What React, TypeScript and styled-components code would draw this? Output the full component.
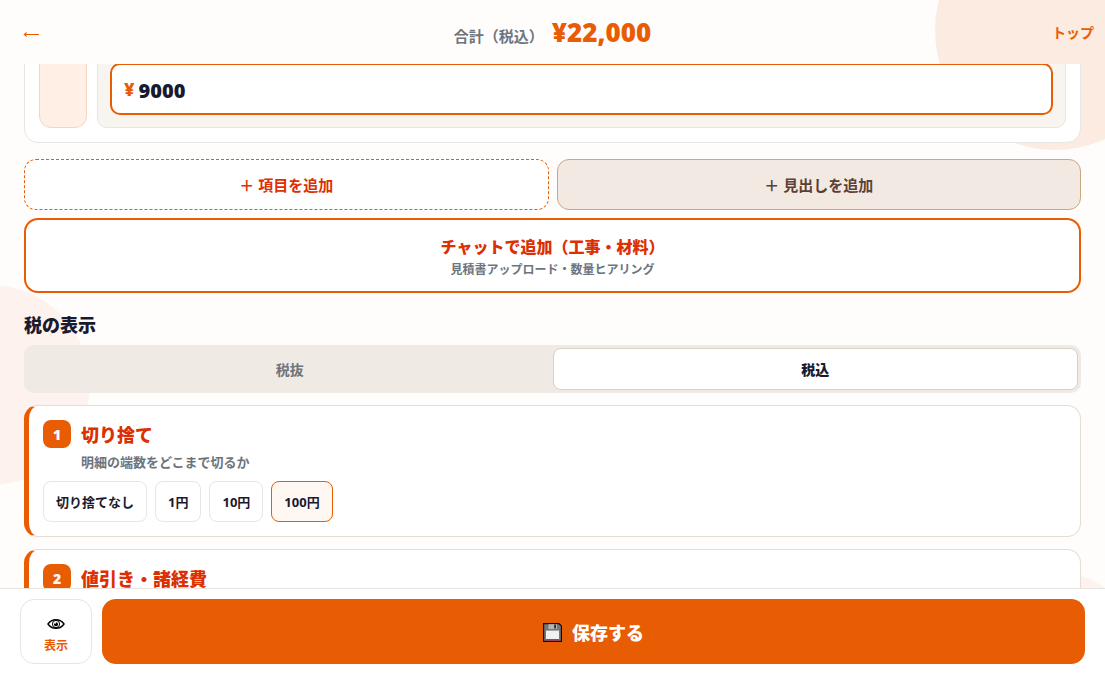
import React, { useState } from "react";
import styled, { createGlobalStyle, css } from "styled-components";

const c = {
  brand: "#e85d04",
  deep: "#dc2f02",
  ink: "#1a1a2e",
  muted: "#6c757d",
  page: "#fffdfb",
  line: "#e9e5e1",
};

const Global = createGlobalStyle`
  *, *::before, *::after { box-sizing: border-box; }
  body {
    margin: 0;
    background: ${c.page};
    color: ${c.ink};
    font-family: "Noto Sans", "Noto Sans CJK JP", sans-serif;
  }
  button, input { font: inherit; color: inherit; margin: 0; }
  button { cursor: pointer; }
`;

const Page = styled.div`
  position: relative;
  display: flex;
  flex-direction: column;
  height: 100vh;
  overflow: hidden;
`;

const Blob = styled.div<{ $place: "top" | "left" | "bottom" }>`
  position: absolute;
  border-radius: 50%;
  ${({ $place }) =>
    $place === "top" &&
    css`
      top: -90px;
      right: -70px;
      width: 240px;
      height: 240px;
      background: #fcebe0;
    `}
  ${({ $place }) =>
    $place === "left" &&
    css`
      bottom: 28%;
      left: -10%;
      width: 200px;
      height: 200px;
      background: #fef2ee;
    `}
  ${({ $place }) =>
    $place === "bottom" &&
    css`
      bottom: -58px;
      right: -32px;
      width: 160px;
      height: 160px;
      background: #fef2ee;
    `}
`;

const Header = styled.header`
  position: relative;
  flex: none;
  display: grid;
  grid-template-columns: 1fr auto 1fr;
  align-items: center;
  height: 64px;
  padding: 0 11px;
`;

const BackButton = styled.button`
  justify-self: start;
  display: grid;
  place-items: center;
  padding: 4px 12px 0;
  border: 0;
  background: none;
  color: ${c.brand};
`;

const Total = styled.div`
  display: flex;
  align-items: baseline;
  gap: 8px;
  font-weight: 700;
  font-size: 15px;
  color: ${c.muted};
`;

const Amount = styled.strong`
  font-size: 26px;
  font-weight: 900;
  color: ${c.brand};
`;

const TopLink = styled.a`
  justify-self: end;
  color: ${c.brand};
  font-size: 14px;
  font-weight: 700;
  text-decoration: none;
`;

const Main = styled.main`
  position: relative;
  flex: 1;
  min-height: 0;
  overflow: hidden;
  padding: 0 24px;
`;

const ItemCard = styled.section`
  display: flex;
  gap: 10px;
  margin-top: -29px;
  padding: 14px;
  border: 1px solid ${c.line};
  border-radius: 14px;
  background: #fff;
`;

const DragHandle = styled.div`
  width: 48px;
  border: 1px solid #f2d6c4;
  border-radius: 12px;
  background: #ffefe5;
`;

const PricePanel = styled.div`
  flex: 1;
  padding: 12px;
  border: 1px solid ${c.line};
  border-radius: 10px;
  background: #f8f4f0;
`;

const PriceField = styled.label`
  display: flex;
  align-items: center;
  gap: 4px;
  height: 52px;
  padding: 0 12px;
  border: 2px solid ${c.brand};
  border-radius: 10px;
  background: #fff;
  color: ${c.brand};
  font-size: 18px;
  font-weight: 900;
`;

const PriceInput = styled.input`
  flex: 1;
  min-width: 0;
  height: 48px;
  padding: 2px 0 0;
  border: 0;
  outline: 0;
  background: none;
  color: ${c.ink};
  font-size: 20px;
  font-weight: 900;
`;

const AddRow = styled.div`
  display: grid;
  grid-template-columns: 1fr 1fr;
  gap: 8px;
  margin-top: 16px;
`;

const AddButton = styled.button<{ $solid?: boolean }>`
  height: 51px;
  border: 1px ${({ $solid }) => ($solid ? "solid #c9a882" : `dashed ${c.brand}`)};
  border-radius: 12px;
  background: ${({ $solid }) => ($solid ? "#f3e9e3" : "#fff")};
  color: ${({ $solid }) => ($solid ? "#5c4033" : c.deep)};
  font-size: 15px;
  font-weight: 700;
`;

const ChatButton = styled.button`
  display: flex;
  flex-direction: column;
  align-items: center;
  justify-content: center;
  width: 100%;
  height: 75px;
  margin-top: 8px;
  border: 2px solid ${c.brand};
  border-radius: 14px;
  background: #fff;
  color: ${c.deep};
  font-size: 16px;
  line-height: 28px;
  font-weight: 800;
`;

const ChatHint = styled.span`
  color: ${c.muted};
  font-size: 12px;
  line-height: 18px;
  font-weight: 600;
`;

const SectionTitle = styled.h2`
  margin: 20px 0 8px;
  font-size: 18px;
  line-height: 24px;
  font-weight: 800;
`;

const Segments = styled.div`
  display: grid;
  grid-template-columns: 1fr 1fr;
  height: 48px;
  padding: 3px;
  border-radius: 10px;
  background: #efeae4;
`;

const Segment = styled.button<{ $active: boolean }>`
  padding: 0;
  border: ${({ $active }) => ($active ? "1px solid #d9d0c7" : "0")};
  border-radius: 8px;
  background: ${({ $active }) => ($active ? "#fff" : "none")};
  color: ${({ $active }) => ($active ? c.ink : c.muted)};
  font-size: 14px;
  font-weight: ${({ $active }) => ($active ? 800 : 700)};
`;

const StepCard = styled.section`
  margin-top: 12px;
  padding: 14px;
  border: 1px solid #e6ddd4;
  border-left: 5px solid ${c.brand};
  border-radius: 14px;
  background: #fff;
`;

const StepHead = styled.div`
  display: grid;
  grid-template-columns: 28px 1fr;
  column-gap: 10px;
  align-items: start;
`;

const StepNumber = styled.span`
  display: grid;
  place-items: center;
  height: 28px;
  border-radius: 8px;
  background: ${c.brand};
  color: #fff;
  font-size: 14px;
  font-weight: 900;
`;

const StepTitle = styled.h3`
  margin: 0;
  color: ${c.deep};
  font-size: 18px;
  line-height: 30px;
  font-weight: 800;
`;

const StepNote = styled.p`
  grid-column: 2;
  margin: 2px 0 9px;
  color: ${c.muted};
  font-size: 13px;
  line-height: 20px;
  font-weight: 600;
`;

const Chips = styled.div`
  display: flex;
  gap: 8px;
`;

const Chip = styled.button<{ $active: boolean }>`
  height: 41px;
  padding: 0 12px;
  border: 1px solid ${({ $active }) => ($active ? c.brand : c.line)};
  border-radius: 8px;
  background: ${({ $active }) => ($active ? "#fff7f2" : "#fff")};
  font-size: 13px;
  font-weight: 700;
`;

const Footer = styled.footer`
  position: relative;
  flex: none;
  display: flex;
  gap: 10px;
  padding: 10px 20px;
  border-top: 1px solid ${c.line};
  background: #fff;
`;

const PreviewButton = styled.button`
  display: flex;
  flex-direction: column;
  align-items: center;
  justify-content: center;
  gap: 8px;
  width: 72px;
  height: 65px;
  padding: 10px 0 0;
  border: 1px solid ${c.line};
  border-radius: 14px;
  background: #fff;
  color: ${c.brand};
  font-size: 12px;
  line-height: 18px;
  font-weight: 700;
`;

const SaveButton = styled.button`
  display: flex;
  align-items: center;
  justify-content: center;
  gap: 10px;
  flex: 1;
  border: 0;
  border-radius: 14px;
  background: ${c.brand};
  color: #fff;
  font-size: 18px;
  font-weight: 800;
`;

const ArrowIcon = () => (
  <svg width="16" height="8" viewBox="0 0 16 8" fill="none" aria-hidden="true">
    <path d="M1 4.5H16" stroke="currentColor" />
    <path d="M0.5 4.5L4 1.5L3 4.5L4 7.5Z" fill="currentColor" />
  </svg>
);

const EyeIcon = () => (
  <svg width="18" height="10" viewBox="0 0 18 10" fill="none" aria-hidden="true">
    <path
      d="M1 5C3 2 6 .8 9 .8S15 2 17 5C15 8 12 9.2 9 9.2S3 8 1 5Z"
      stroke="#000"
      strokeWidth="1.4"
    />
    <circle cx="9" cy="5" r="3.6" stroke="#000" />
    <circle cx="9" cy="5.2" r="2" fill="#000" />
    <circle cx="8.2" cy="3.8" r="0.9" fill="#fff" />
  </svg>
);

const FloppyIcon = () => (
  <svg width="19" height="20" viewBox="0 0 19 20" aria-hidden="true">
    <path d="M.6 1.6H16L18.4 4V19.4H.6Z" fill="#777" stroke="#0c0c0c" strokeWidth="1.2" />
    <path d="M5.5 2.2H14V7H5.5Z" fill="#b0b5b8" />
    <path d="M11.2 2.6H13V6.6H11.2Z" fill="#2c2c2c" />
    <path d="M3 8.6H16V17H3Z" fill="#f1f1f1" />
    <path d="M3 17H16V18.4H3Z" fill="#e8186c" />
  </svg>
);

const roundings = ["切り捨てなし", "1円", "10円", "100円"];
const taxModes = ["税抜", "税込"];

export default function App() {
  const [price, setPrice] = useState("9000");
  const [tax, setTax] = useState("税込");
  const [rounding, setRounding] = useState("100円");

  return (
    <>
      <Global />
      <Page>
        <Blob $place="top" />
        <Blob $place="left" />
        <Blob $place="bottom" />
        <Header>
          <BackButton aria-label="戻る">
            <ArrowIcon />
          </BackButton>
          <Total>
            <span>合計（税込）</span>
            <Amount>¥22,000</Amount>
          </Total>
          <TopLink href="#">トップ</TopLink>
        </Header>
        <Main>
          <ItemCard>
            <DragHandle />
            <PricePanel>
              <PriceField>
                ¥
                <PriceInput
                  inputMode="numeric"
                  value={price}
                  onChange={(e) => setPrice(e.target.value)}
                />
              </PriceField>
            </PricePanel>
          </ItemCard>
          <AddRow>
            <AddButton>＋ 項目を追加</AddButton>
            <AddButton $solid>＋ 見出しを追加</AddButton>
          </AddRow>
          <ChatButton>
            チャットで追加（工事・材料）
            <ChatHint>見積書アップロード・数量ヒアリング</ChatHint>
          </ChatButton>
          <SectionTitle>税の表示</SectionTitle>
          <Segments>
            {taxModes.map((mode) => (
              <Segment
                key={mode}
                $active={mode === tax}
                aria-pressed={mode === tax}
                onClick={() => setTax(mode)}
              >
                {mode}
              </Segment>
            ))}
          </Segments>
          <StepCard>
            <StepHead>
              <StepNumber>1</StepNumber>
              <StepTitle>切り捨て</StepTitle>
              <StepNote>明細の端数をどこまで切るか</StepNote>
            </StepHead>
            <Chips>
              {roundings.map((label) => (
                <Chip
                  key={label}
                  $active={label === rounding}
                  aria-pressed={label === rounding}
                  onClick={() => setRounding(label)}
                >
                  {label}
                </Chip>
              ))}
            </Chips>
          </StepCard>
          <StepCard>
            <StepHead>
              <StepNumber>2</StepNumber>
              <StepTitle>値引き・諸経費</StepTitle>
            </StepHead>
          </StepCard>
        </Main>
        <Footer>
          <PreviewButton>
            <EyeIcon />
            表示
          </PreviewButton>
          <SaveButton>
            <FloppyIcon />
            保存する
          </SaveButton>
        </Footer>
      </Page>
    </>
  );
}
